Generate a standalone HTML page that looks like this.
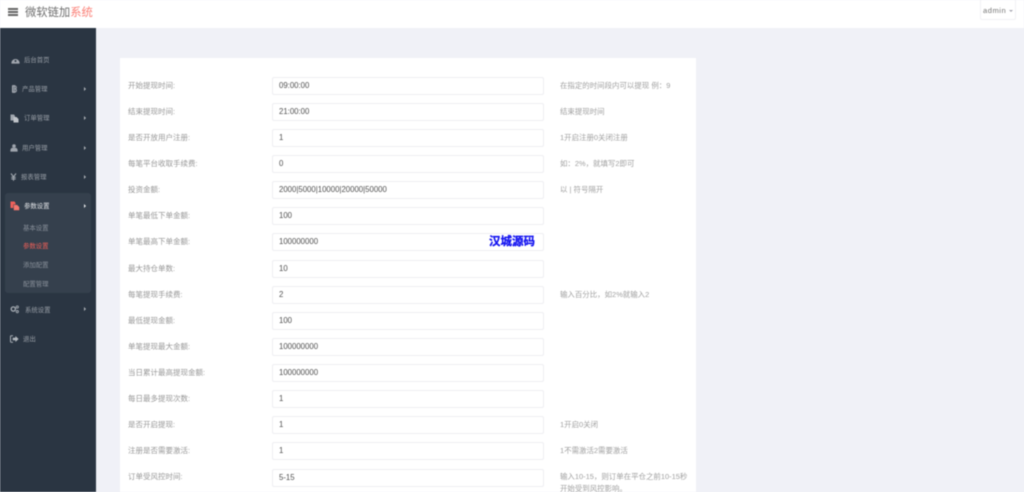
<!DOCTYPE html>
<html lang="zh">
<head>
<meta charset="utf-8">
<title>微软链加系统</title>
<style>
html,body{margin:0;padding:0}
body{width:1024px;height:492px;overflow:hidden;position:relative;background:#f0f1f7;font-family:"Liberation Sans","Noto Sans CJK SC",sans-serif}
#wrap{position:absolute;left:0;top:0;width:1024px;height:492px;overflow:hidden;filter:blur(.4px)}
#hd{position:absolute;left:0;top:0;width:1024px;height:28px;background:#fff}
#side{position:absolute;left:0;top:28px;width:96px;height:464px;background:#2a3542}
#panel{position:absolute;left:120px;top:58px;width:576px;height:440px;background:#fff}
.abs,.l,.i,.h,.m,.s,.a,svg{position:absolute}
.l,.h,.m,.s,.a{white-space:nowrap;line-height:10px;height:10px}
.l{left:128px;font-size:7.5px;color:#979797;margin-top:1px}
.h{left:560px;font-size:7.45px;color:#a0a0a0;margin-top:1px}
.i{left:272px;width:270px;height:16px;border:1px solid #eeeef1;border-radius:2px;background:#fff;font-size:7.8px;line-height:16px;color:#505050;text-indent:6px;box-sizing:content-box}
.m{font-size:6.4px;color:#989ea6;margin-top:1px}
.s{left:23px;font-size:6.4px;color:#89909a;margin-top:1px}
.a{left:84px;width:0;height:0;border-left:2.5px solid #aeb2b7;border-top:2.5px solid transparent;border-bottom:2.5px solid transparent}
</style>
</head>
<body>
<div id="wrap">
<div id="hd"></div>
<div id="side"></div>
<div id="panel"></div>

<!-- header -->
<div class="abs" style="left:8px;top:8.300px;width:9.500px;height:1.900px;background:#666"></div>
<div class="abs" style="left:8px;top:11.100px;width:9.500px;height:1.900px;background:#666"></div>
<div class="abs" style="left:8px;top:13.900px;width:9.500px;height:1.900px;background:#666"></div>
<div class="abs" style="left:25px;top:6px;font-size:11.3px;line-height:15px;color:#6e6e6e;white-space:nowrap">微软链加<span style="color:#fb8077">系统</span></div>
<div class="abs" style="left:980px;top:-1px;width:34px;height:19px;background:#fff;border:1px solid #f2f2f5;border-radius:2px"></div>
<div class="abs" style="left:983px;top:6px;font-size:7.6px;line-height:10px;color:#777;letter-spacing:.5px">admin</div>
<div class="abs" style="left:1009px;top:9.500px;width:0;height:0;border-top:2.2px solid #a6a6b0;border-left:2px solid transparent;border-right:2px solid transparent"></div>

<!-- sidebar active block -->
<div class="abs" style="left:5px;top:193px;width:86px;height:100px;background:#35404d;border-radius:3px"></div>

<!-- sidebar icons -->
<svg style="left:10.500px;top:56px" width="9" height="8" viewBox="0 0 9 8"><path d="M.3 7.200A4.200 4.200 0 1 1 8.700 7.200L8.200 7.600H.8Z" fill="#a0a6ae"/><circle cx="4.500" cy="5" r="1" fill="#2a3542"/></svg>
<svg style="left:11px;top:85px" width="6" height="8" viewBox="0 0 6 8"><path d="M1.500 1H4A1.500 1.500 0 0 1 4.300 3.900 1.600 1.600 0 0 1 4 7H1.500ZM2 0V8M3.500 0V8" fill="none" stroke="#a0a6ae" stroke-width="1.100"/></svg>
<svg style="left:10px;top:114px" width="9" height="9" viewBox="0 0 9 9"><path d="M.5.500H4L5 2V6.500H.5Z" fill="#a0a6ae"/><path d="M3.500 3H6.500L8.500 5V8.500H3.500Z" fill="#c0c4c9"/></svg>
<svg style="left:10px;top:144px" width="8" height="8" viewBox="0 0 8 8"><circle cx="4" cy="2" r="1.800" fill="#a0a6ae"/><path d="M.4 7.600V6A2.200 2.200 0 0 1 2.600 3.800H5.400A2.200 2.200 0 0 1 7.600 6V7.600Z" fill="#a0a6ae"/></svg>
<svg style="left:10px;top:173px" width="7" height="8" viewBox="0 0 7 8"><path d="M1 .5 3.500 3.800 6 .5M3.500 3.800V7.800M1.300 4.300H5.700M1.300 6H5.700" fill="none" stroke="#a0a6ae" stroke-width="1.100"/></svg>
<svg style="left:10px;top:201px" width="10" height="10" viewBox="0 0 10 10"><path d="M.5.500H4.500L5.500 2V7H.5Z" fill="#f0605a"/><path d="M3.500 3.600H7L9.500 6V9.500H3.500Z" fill="#f4776f" stroke="#35404d" stroke-width=".5"/></svg>
<svg style="left:10px;top:305px" width="9" height="9" viewBox="0 0 9 9"><circle cx="3.300" cy="4" r="2.100" fill="none" stroke="#a8aeb5" stroke-width="1.300"/><circle cx="7.300" cy="2" r="1.100" fill="none" stroke="#a8aeb5" stroke-width=".9"/><circle cx="7.300" cy="6.600" r="1.100" fill="none" stroke="#a8aeb5" stroke-width=".9"/></svg>
<svg style="left:10px;top:335px" width="9" height="8" viewBox="0 0 9 8"><path d="M3 .8H1.200Q.5.800.5 1.500V6.500Q.5 7.200 1.200 7.200H3" fill="none" stroke="#a8aeb5" stroke-width="1"/><path d="M2.700 2.800H5.400V1L8.600 4 5.400 7V5.200H2.700Z" fill="#b4b9bf"/></svg>

<!-- sidebar labels -->
<div class="m" style="left:24px;top:55px">后台首页</div>
<div class="m" style="left:22px;top:84px">产品管理</div>
<div class="m" style="left:24px;top:113px">订单管理</div>
<div class="m" style="left:22px;top:143px">用户管理</div>
<div class="m" style="left:21px;top:172px">报表管理</div>
<div class="m" style="left:24px;top:201px;color:#e2e4e7">参数设置</div>
<div class="s" style="top:223px">基本设置</div>
<div class="s" style="top:241px;color:#ee5f58">参数设置</div>
<div class="s" style="top:260px">添加配置</div>
<div class="s" style="top:279px">配置管理</div>
<div class="m" style="left:25px;top:305px">系统设置</div>
<div class="m" style="left:23px;top:334px">退出</div>
<div class="a" style="top:87px"></div>
<div class="a" style="top:116px"></div>
<div class="a" style="top:146px"></div>
<div class="a" style="top:175px"></div>
<div class="a" style="top:204px;border-left-color:#e6e8ea"></div>
<div class="a" style="top:307px"></div>

<!-- form labels -->
<div class="l" style="top:80px">开始提现时间:</div>
<div class="l" style="top:106px">结束提现时间:</div>
<div class="l" style="top:132px">是否开放用户注册:</div>
<div class="l" style="top:158px">每笔平台收取手续费:</div>
<div class="l" style="top:184px">投资金额:</div>
<div class="l" style="top:210px">单笔最低下单金额:</div>
<div class="l" style="top:236px">单笔最高下单金额:</div>
<div class="l" style="top:263px">最大持仓单数:</div>
<div class="l" style="top:289px">每笔提现手续费:</div>
<div class="l" style="top:315px">最低提现金额:</div>
<div class="l" style="top:341px">单笔提现最大金额:</div>
<div class="l" style="top:367px">当日累计最高提现金额:</div>
<div class="l" style="top:393px">每日最多提现次数:</div>
<div class="l" style="top:419px">是否开启提现:</div>
<div class="l" style="top:445px">注册是否需要激活:</div>
<div class="l" style="top:471px">订单受风控时间:</div>

<!-- form inputs -->
<div class="i" style="top:77px">09:00:00</div>
<div class="i" style="top:103px">21:00:00</div>
<div class="i" style="top:129px">1</div>
<div class="i" style="top:155px">0</div>
<div class="i" style="top:181px">2000|5000|10000|20000|50000</div>
<div class="i" style="top:207px">100</div>
<div class="i" style="top:233px">100000000</div>
<div class="i" style="top:260px">10</div>
<div class="i" style="top:286px">2</div>
<div class="i" style="top:312px">100</div>
<div class="i" style="top:338px">100000000</div>
<div class="i" style="top:364px">100000000</div>
<div class="i" style="top:390px">1</div>
<div class="i" style="top:416px">1</div>
<div class="i" style="top:442px">1</div>
<div class="i" style="top:469px">5-15</div>

<!-- hints -->
<div class="h" style="top:80px">在指定的时间段内可以提现 例：9</div>
<div class="h" style="top:106px">结束提现时间</div>
<div class="h" style="top:132px">1开启注册0关闭注册</div>
<div class="h" style="top:158px">如：2%，就填写2即可</div>
<div class="h" style="top:184px">以 | 符号隔开</div>
<div class="h" style="top:289px">输入百分比，如2%就输入2</div>
<div class="h" style="top:419px">1开启0关闭</div>
<div class="h" style="top:445px">1不需激活2需要激活</div>
<div class="h" style="top:471px">输入10-15，则订单在平仓之前10-15秒</div>
<div class="h" style="top:483px">开始受到风控影响。</div>

<!-- watermark -->
<div class="abs" style="left:489px;top:235px;font-size:11.500px;line-height:14px;font-weight:700;color:#1212f0;white-space:nowrap;-webkit-text-stroke:.3px #1212f0">汉城源码</div>
</div>
</body>
</html>
